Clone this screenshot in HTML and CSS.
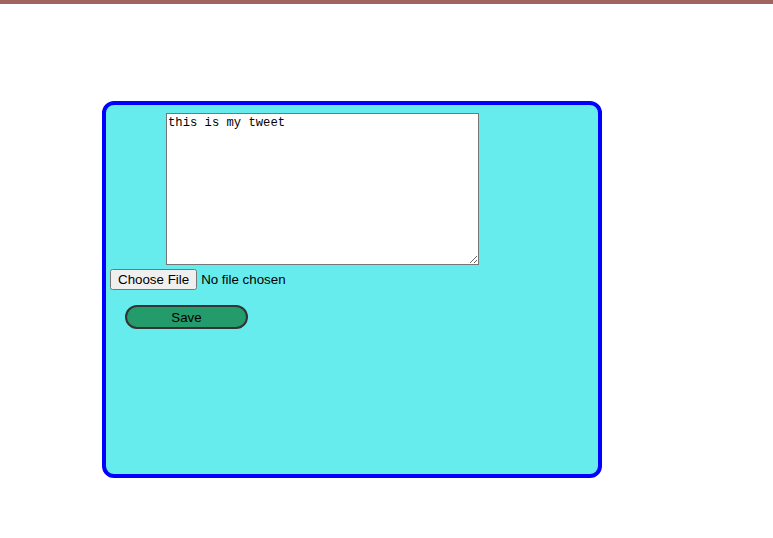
FILE: index.html
```html
<!DOCTYPE html>
<html>
<head>
<meta charset="utf-8">
<link rel="stylesheet" href="styles.css">
</head>
<body>
<div class="topbar"></div>
<div class="card">
  <textarea class="tweet">this is my tweet</textarea>
  <input class="file" type="file">
  <button class="save">Save</button>
</div>
</body>
</html>
```
FILE: styles.css
```css
html, body {
  margin: 0;
  padding: 0;
  background: #ffffff;
}
.topbar {
  height: 4px;
  background: #a0645f;
}
.card {
  box-sizing: border-box;
  width: 500px;
  height: 377px;
  margin: 97px 0 0 102px;
  border: 4px solid #0000ff;
  border-radius: 12px;
  background: #66ecec;
  padding: 8px 0 0 4px;
  display: flex;
  flex-direction: column;
  align-items: flex-start;
}
.tweet {
  box-sizing: border-box;
  width: 313px;
  height: 152px;
  margin: 0 0 0 56px;
  border: 1px solid #767676;
  padding: 2px 1px;
  font-family: "Liberation Mono", monospace;
  font-size: 12.2px;
  background: #fff;
  color: #000;
  resize: both;
}
.file {
  margin: 4px 0 0 0;
  font-family: "Liberation Sans", Arial, sans-serif;
  font-size: 13.33px;
  color: #000;
}
.save {
  box-sizing: border-box;
  width: 123px;
  height: 24px;
  margin: 15px 0 0 15px;
  background: #249b6b;
  border: 2px solid #333333;
  border-radius: 12px;
  font-family: "Liberation Sans", Arial, sans-serif;
  font-size: 13.33px;
  color: #000;
  padding: 0;
}
```
